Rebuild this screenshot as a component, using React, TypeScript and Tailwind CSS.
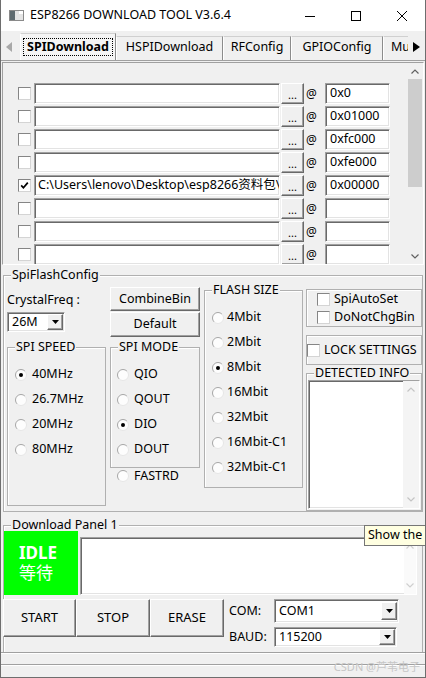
import React from 'react';

// classic Win32 bevels
const sunken =
  'bg-white border border-t-[#a0a0a0] border-l-[#a0a0a0] border-b-white border-r-white shadow-[inset_1px_1px_0_#696969,inset_-1px_-1px_0_#e3e3e3]';
const raised =
  'bg-[#f0f0f0] border border-t-white border-l-white border-b-[#696969] border-r-[#696969] shadow-[inset_-1px_-1px_0_#a0a0a0]';

function Chevron({ dir, color = '#606060' }: { dir: 'up' | 'down'; color?: string }) {
  return (
    <svg width="8" height="5" viewBox="0 0 8 5">
      <path
        d={dir === 'up' ? 'M0.5 4.5L4 1L7.5 4.5' : 'M0.5 0.5L4 4L7.5 0.5'}
        fill="none"
        stroke={color}
        strokeWidth="1.2"
      />
    </svg>
  );
}

function Check({ checked }: { checked?: boolean }) {
  return (
    <div className="w-[13px] h-[13px] shrink-0 bg-white border border-t-[#858585] border-l-[#858585] border-b-[#d4d4d4] border-r-[#d4d4d4] flex items-center justify-center">
      {checked && (
        <svg width="9" height="9" viewBox="0 0 9 9">
          <path d="M1.2 4.4L3.4 6.8L7.8 1.6" fill="none" stroke="#000" strokeWidth="1.7" />
        </svg>
      )}
    </div>
  );
}

function Radio({ checked }: { checked?: boolean }) {
  return (
    <svg width="12" height="12" viewBox="0 0 12 12" className="shrink-0">
      <circle cx="6" cy="6" r="5.5" fill="#fdfdfd" />
      <path d="M2.1 9.9A5.5 5.5 0 0 1 9.9 2.1" fill="none" stroke="#a6a6a6" />
      <path d="M9.9 2.1A5.5 5.5 0 0 1 2.1 9.9" fill="none" stroke="#e6e6e6" />
      {checked && <circle cx="6" cy="6" r="2" fill="#000" />}
    </svg>
  );
}

function RadioRow({ label, checked, gap = 'gap-[5px]' }: { label: string; checked?: boolean; gap?: string }) {
  return (
    <div className={`h-[25px] flex items-center ${gap}`}>
      <Radio checked={checked} />
      <span className="leading-none">{label}</span>
    </div>
  );
}

function Group({ label, className = '', children }: { label: string; className?: string; children?: React.ReactNode }) {
  return (
    <div className={`border border-[#b0b0b0] shadow-[inset_1px_1px_0_#fff] ${className}`}>
      <div className="-mt-[7px] ml-[7px] w-fit h-[12px] leading-[12px] px-[1px] bg-[#f0f0f0] whitespace-nowrap">
        {label}
      </div>
      {children}
    </div>
  );
}

function Select({ value, className = '', btn = 'h-full' }: { value: string; className?: string; btn?: string }) {
  return (
    <div className={`${sunken} p-px flex items-center ${className}`}>
      <span className="pl-[3px] flex-1 leading-none">{value}</span>
      <div className={`${raised} w-[16px] ${btn} flex items-center justify-center`}>
        <svg width="7" height="4" viewBox="0 0 7 4">
          <path d="M0 0h7L3.5 4z" fill="#000" />
        </svg>
      </div>
    </div>
  );
}

function TitleBar() {
  return (
    <div className="h-[31px] shrink-0 bg-white flex items-center">
      <svg width="15" height="11" viewBox="0 0 15 11" className="ml-[8px]">
        <rect x="0.5" y="0.5" width="14" height="10" fill="#e4e4e4" stroke="#8a8a8a" />
        <rect x="1" y="1" width="5" height="9" fill="#5f6b70" />
        <rect x="10" y="1" width="4" height="3" fill="#ffffff" />
      </svg>
      <span className="ml-[6px] text-[12.5px]">ESP8266 DOWNLOAD TOOL V3.6.4</span>
      <div className="ml-auto flex h-full">
        <div className="w-[46px] flex items-center justify-center">
          <svg width="10" height="10" viewBox="0 0 10 10">
            <path d="M0 5.5h10" stroke="#000" />
          </svg>
        </div>
        <div className="w-[46px] flex items-center justify-center">
          <svg width="10" height="10" viewBox="0 0 10 10">
            <rect x="0.5" y="0.5" width="9" height="9" fill="none" stroke="#000" />
          </svg>
        </div>
        <div className="w-[46px] flex items-center justify-center">
          <svg width="10" height="10" viewBox="0 0 10 10">
            <path d="M0 0L10 10M10 0L0 10" stroke="#000" />
          </svg>
        </div>
      </div>
    </div>
  );
}

const tabs = [
  { label: 'HSPIDownload', w: 'w-[107px]' },
  { label: 'RFConfig', w: 'w-[68px]' },
  { label: 'GPIOConfig', w: 'w-[92px]' },
];

function TabStrip() {
  return (
    <div className="h-[29px] shrink-0 flex items-end">
      <svg width="7" height="10" viewBox="0 0 7 10" className="ml-[5px] self-center mt-[2px]">
        <path d="M6 0v10L0 5z" fill="#a8a8a8" />
      </svg>
      <div className="ml-[7px] w-[96px] h-[27px] bg-[#f5f5f5] border-t border-l border-r border-t-[#d0d0d0] border-l-white border-r-[#8c8c8c] flex items-center justify-center">
        <span className="px-[3px] leading-[16px] border border-dotted border-black font-bold">SPIDownload</span>
      </div>
      {tabs.map((t) => (
        <div
          key={t.label}
          className={`${t.w} h-[24px] border-t border-l border-r border-t-[#d0d0d0] border-l-white border-r-[#8c8c8c] flex items-center justify-center pb-[2px]`}
        >
          {t.label}
        </div>
      ))}
      <div className="w-[25px] h-[24px] border-t border-l border-t-[#d0d0d0] border-l-white overflow-hidden flex items-center pl-[7px] pb-[2px] whitespace-nowrap">
        MultiDownload
      </div>
      <svg width="7" height="10" viewBox="0 0 7 10" className="ml-[5px] self-center mt-[2px]">
        <path d="M0 0v10L7 5z" fill="#000" />
      </svg>
    </div>
  );
}

const fileRows = [
  { path: '', addr: '0x0' },
  { path: '', addr: '0x01000' },
  { path: '', addr: '0xfc000' },
  { path: '', addr: '0xfe000' },
  { path: 'C:\\Users\\lenovo\\Desktop\\esp8266资料包\\', addr: '0x00000', on: true },
  { path: '', addr: '' },
  { path: '', addr: '' },
  { path: '', addr: '' },
];

function FileList() {
  return (
    <div className="ml-px mt-px w-[422px] h-[203px] shrink-0 border border-t-[#a0a0a0] border-l-[#a0a0a0] border-b-white border-r-white flex">
      <div className="flex-1 overflow-hidden pt-[20px] pl-[15px] flex flex-col gap-[2px]">
        {fileRows.map((r, i) => (
          <div key={i} className="h-[21px] shrink-0 flex items-center">
            <Check checked={r.on} />
            <div className={`${sunken} ml-[3px] w-[246px] h-full flex items-center pl-[3px] overflow-hidden whitespace-nowrap`}>
              {r.path}
            </div>
            <div className={`${raised} ml-px w-[23px] h-full flex items-end justify-center pb-[2px] text-[11px] leading-[12px]`}>
              ...
            </div>
            <span className="ml-[2px] w-[12px] text-[12px]">@</span>
            <div className={`${sunken} ml-[7px] w-[65px] h-full flex items-center pl-[4px]`}>{r.addr}</div>
          </div>
        ))}
      </div>
      <div className="w-[16px] h-full flex flex-col items-center bg-[#f0f0f0]">
        <div className="h-[16px] flex items-center justify-center">
          <Chevron dir="up" />
        </div>
        <div className="w-[14px] h-[108px] bg-[#cdcdcd]" />
        <div className="flex-1" />
        <div className="h-[16px] flex items-center justify-center">
          <Chevron dir="down" />
        </div>
      </div>
    </div>
  );
}

function SpiFlashConfig() {
  return (
    <Group label="SpiFlashConfig" className="ml-[2px] mt-[10px] w-[420px] h-[237px] shrink-0">
      <div className="flex pl-[3px]">
        <div className="w-[99px] flex flex-col">
          <div className="mt-[11px] h-[16px] leading-[16px]">CrystalFreq :</div>
          <Select value="26M" className="mt-[4px] w-[58px] h-[20px]" />
          <Group label="SPI SPEED" className="mt-[15px] h-[159px]">
            <div className="pt-[9px] pl-[7px]">
              <RadioRow label="40MHz" checked />
              <RadioRow label="26.7MHz" />
              <RadioRow label="20MHz" />
              <RadioRow label="80MHz" />
            </div>
          </Group>
        </div>

        <div className="ml-[4px] w-[90px] flex flex-col">
          <div className={`${raised} mt-[6px] h-[24px] flex items-center justify-center`}>CombineBin</div>
          <div className={`${raised} mt-px h-[25px] flex items-center justify-center`}>Default</div>
          <Group label="SPI MODE" className="mt-[10px] h-[121px]">
            <div className="pt-[9px] pl-[6px]">
              <RadioRow label="QIO" />
              <RadioRow label="QOUT" />
              <RadioRow label="DIO" checked />
              <RadioRow label="DOUT" />
            </div>
          </Group>
          <div className="h-[16px] pl-[7px] flex items-center gap-[5px]">
            <Radio />
            <span className="leading-none">FASTRD</span>
          </div>
        </div>

        <div className="ml-[4px] w-[99px]">
          <Group label="FLASH SIZE" className="mt-[9px] h-[198px]">
            <div className="pt-[9px] pl-[7px]">
              <RadioRow label="4Mbit" gap="gap-[3px]" />
              <RadioRow label="2Mbit" gap="gap-[3px]" />
              <RadioRow label="8Mbit" checked gap="gap-[3px]" />
              <RadioRow label="16Mbit" gap="gap-[3px]" />
              <RadioRow label="32Mbit" gap="gap-[3px]" />
              <RadioRow label="16Mbit-C1" gap="gap-[3px]" />
              <RadioRow label="32Mbit-C1" gap="gap-[3px]" />
            </div>
          </Group>
        </div>

        <div className="ml-[3px] w-[116px] flex flex-col">
          <div className="mt-[8px] h-[38px] border border-[#b0b0b0] shadow-[inset_1px_1px_0_#fff] pl-[10px]">
            <div className="h-[18px] flex items-center gap-[4px]">
              <Check />
              <span className="leading-none">SpiAutoSet</span>
            </div>
            <div className="h-[18px] flex items-center gap-[4px]">
              <Check />
              <span className="leading-none">DoNotChgBin</span>
            </div>
          </div>
          <div className="mt-[8px] h-[30px] border border-[#b0b0b0] shadow-[inset_1px_1px_0_#fff] flex items-center gap-[4px]">
            <Check />
            <span className="leading-none">LOCK SETTINGS</span>
          </div>
          <Group label="DETECTED INFO" className="mt-[8px] h-[138px] flex flex-col">
            <div className={`${sunken} mt-px ml-px mr-px mb-px flex-1 flex justify-end`}>
              <div className="w-[16px] h-full flex flex-col items-center justify-between py-[6px] bg-[#f4f4f4]">
                <Chevron dir="up" color="#c4c4c4" />
                <Chevron dir="down" color="#c4c4c4" />
              </div>
            </div>
          </Group>
        </div>
      </div>
    </Group>
  );
}

function DownloadPanel() {
  return (
    <Group label="Download Panel 1" className="ml-[2px] mt-[13px] w-[420px] h-[127px] shrink-0 border-b-0">
      <div className="flex">
        <div className="w-[74px] h-[64px] bg-[#00ff00] text-white flex flex-col justify-center pl-[15px] text-[17px] leading-[20px]">
          <span className="font-bold">IDLE</span>
          <span>等待</span>
        </div>
        <div className={`${sunken} ml-[2px] mt-[6px] w-[337px] h-[58px] flex justify-end`}>
          <div className="w-[12px] h-full flex flex-col items-center justify-between py-[6px] bg-[#fafafa]">
            <Chevron dir="up" color="#cfcfcf" />
            <Chevron dir="down" color="#cfcfcf" />
          </div>
        </div>
      </div>
      <div className="mt-[4px] -ml-px flex">
        <div className={`${raised} w-[73px] h-[38px] flex items-center justify-center text-[13px]`}>START</div>
        <div className={`${raised} w-[74px] h-[38px] flex items-center justify-center text-[13px]`}>STOP</div>
        <div className={`${raised} w-[74px] h-[38px] flex items-center justify-center text-[13px]`}>ERASE</div>
        <div className="ml-[5px] grid grid-cols-[45px_auto] grid-rows-[24px_20px] gap-y-[4px] items-center">
          <span>COM:</span>
          <Select value="COM1" className="w-[125px] h-[24px]" btn="h-[18px]" />
          <span>BAUD:</span>
          <Select value="115200" className="w-[123px] h-[20px]" />
        </div>
      </div>
    </Group>
  );
}

function StatusBar() {
  return (
    <div className="h-[25px] shrink-0 flex flex-col">
      <div className="h-[12px] border-t border-[#a0a0a0] shadow-[inset_0_1px_0_#fff]" />
      <div className="h-[13px] border-t border-[#a0a0a0] shadow-[inset_0_1px_0_#fff]" />
    </div>
  );
}

export default function App() {
  return (
    <div className="relative w-[426px] h-[678px] overflow-hidden bg-[#f0f0f0] border-x border-b border-[#6e6e6e] font-['Noto_Sans','Noto_Sans_CJK_SC',sans-serif] text-[12.5px] text-black flex flex-col">
      <TitleBar />
      <TabStrip />
      <div className="h-[592px] shrink-0 border-t border-[#a0a0a0] flex flex-col">
        <FileList />
        <SpiFlashConfig />
        <DownloadPanel />
      </div>
      <StatusBar />

      <div className="absolute left-[363px] top-[525px] h-[21px] px-[3px] border border-[#767676] bg-[#ffffe1] whitespace-nowrap flex items-center">
        Show the flash download info
      </div>
      <div className="absolute right-[5px] top-[659px] text-[11px] text-[#c6c6c6] whitespace-nowrap">
        CSDN @芦苇电子
      </div>
    </div>
  );
}
